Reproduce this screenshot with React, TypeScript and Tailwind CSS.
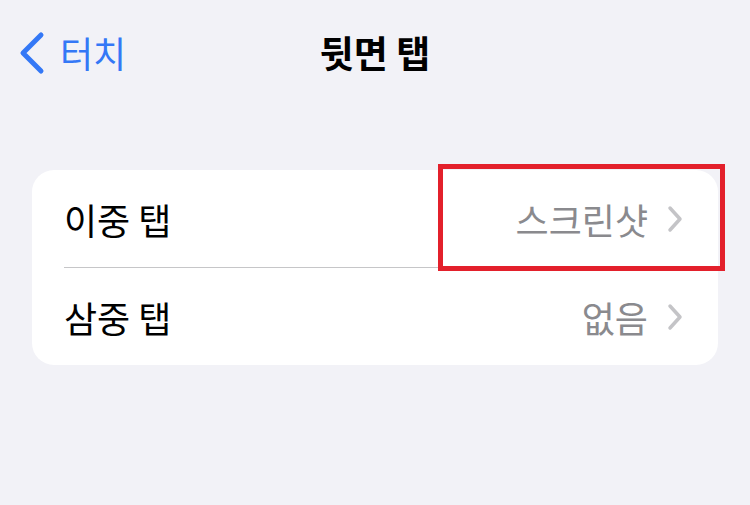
import React from "react";

const font = { fontFamily: '"Noto Sans CJK KR", "Noto Sans", sans-serif' };

function SmallChevron() {
  return (
    <svg width="18" height="28" viewBox="0 0 18 28" className="ml-[18px]">
      <path d="M4 3 L14 14 L4 25" fill="none" stroke="#c4c4c7" strokeWidth="3.5" strokeLinecap="round" strokeLinejoin="round" />
    </svg>
  );
}

export default function App() {
  return (
    <div className="w-[750px] h-[505px] bg-[#f2f2f7] overflow-hidden" style={font}>
      <div className="relative h-[106px] flex items-center">
        <div className="flex items-center pl-[18px]">
          <svg width="28" height="44" viewBox="0 0 28 44">
            <path d="M23 4 L5 22 L23 40" fill="none" stroke="#3478f6" strokeWidth="5" strokeLinecap="round" strokeLinejoin="round" />
          </svg>
          <span className="ml-[14px] text-[36px] leading-none text-[#3478f6] -mt-[2px]">터치</span>
        </div>
        <div className="absolute left-0 right-0 text-center text-[37px] font-bold leading-none text-black -mt-[2px]">뒷면 탭</div>
      </div>
      <div className="mt-[64px] mx-[32px] relative bg-white rounded-[22px]">
        <div className="h-[97px] flex items-center pl-[32px] pr-[34px]">
          <span className="text-[36px] leading-none text-black">이중 탭</span>
          <span className="ml-auto text-[36px] leading-none text-[#8a8a8e]">스크린샷</span>
          <SmallChevron />
        </div>
        <div className="ml-[32px] h-px bg-[#c6c6c8]" />
        <div className="h-[97px] flex items-center pl-[32px] pr-[34px]">
          <span className="text-[36px] leading-none text-black">삼중 탭</span>
          <span className="ml-auto text-[36px] leading-none text-[#8a8a8e]">없음</span>
          <SmallChevron />
        </div>
        <div className="absolute left-[406px] top-[-6px] w-[287px] h-[107px] border-[5px] border-[#e3202b]" />
      </div>
    </div>
  );
}
